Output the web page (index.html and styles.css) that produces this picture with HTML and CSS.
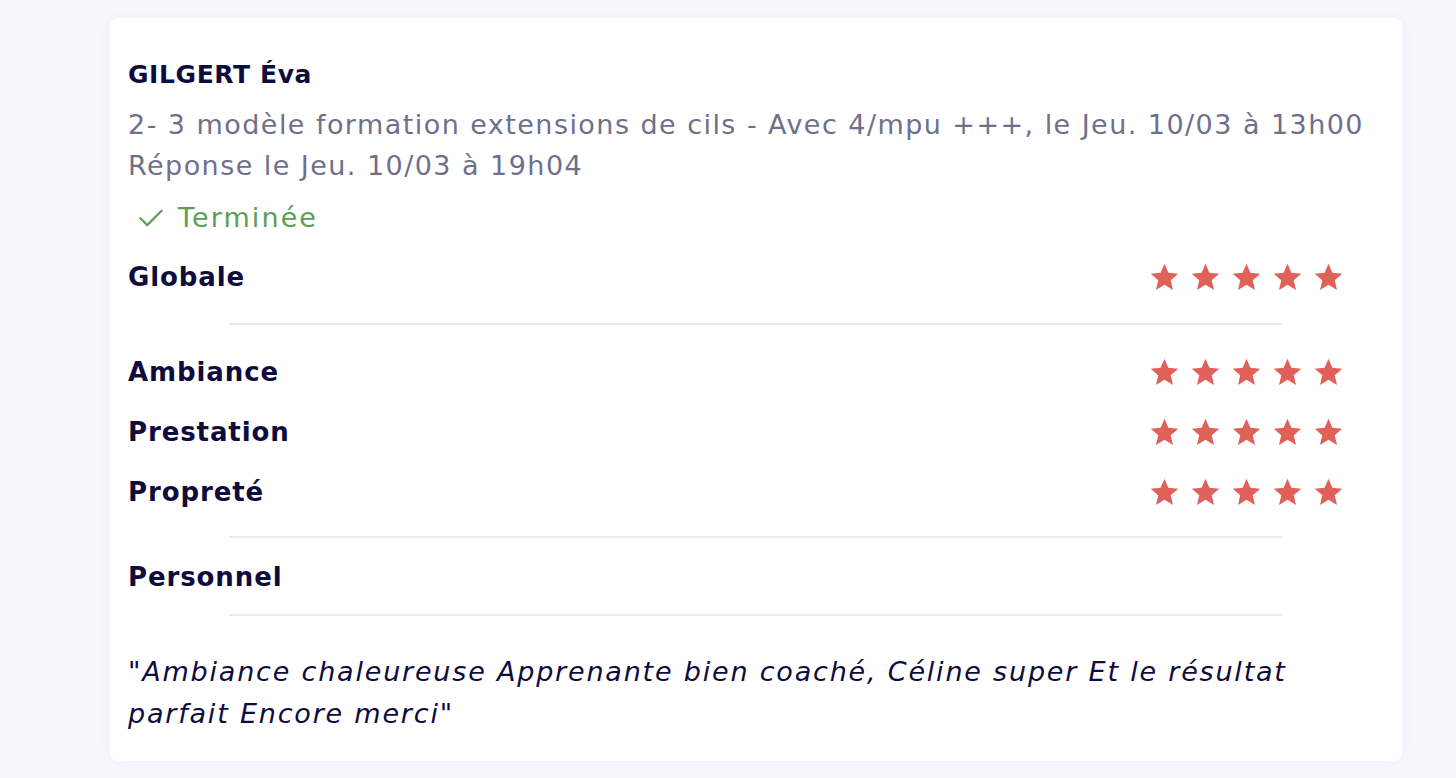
FILE: index.html
```html
<!DOCTYPE html>
<html lang="fr">
<head>
    <meta charset="UTF-8">
    <meta name="viewport" content="width=device-width, initial-scale=1.0">
    <title>Avis client</title>
    <link rel="stylesheet" href="styles.css">
</head>
<body>
    <div class="review-card">
        <h2 class="client-name">GILGERT Éva</h2>
        <p class="booking-info">2- 3 modèle formation extensions de cils - Avec 4/mpu +++, le Jeu. 10/03 à 13h00<br>Réponse le Jeu. 10/03 à 19h04</p>

        <div class="status">
            <svg class="status-icon" viewBox="0 0 24 24" width="30" height="30"><path d="M3.5 13l5.5 5.5L20.5 7" fill="none" stroke="currentColor" stroke-width="1.8" stroke-linecap="round" stroke-linejoin="round"/></svg>
            <span>Terminée</span>
        </div>

        <div class="rating-row rating-main">
            <span class="rating-label">Globale</span>
            <div class="stars">
                <svg viewBox="0 0 24 24"><path d="M12 17.27L18.18 21l-1.64-7.03L22 9.24l-7.19-.61L12 2 9.19 8.63 2 9.24l5.46 4.73L5.82 21z"/></svg>
                <svg viewBox="0 0 24 24"><path d="M12 17.27L18.18 21l-1.64-7.03L22 9.24l-7.19-.61L12 2 9.19 8.63 2 9.24l5.46 4.73L5.82 21z"/></svg>
                <svg viewBox="0 0 24 24"><path d="M12 17.27L18.18 21l-1.64-7.03L22 9.24l-7.19-.61L12 2 9.19 8.63 2 9.24l5.46 4.73L5.82 21z"/></svg>
                <svg viewBox="0 0 24 24"><path d="M12 17.27L18.18 21l-1.64-7.03L22 9.24l-7.19-.61L12 2 9.19 8.63 2 9.24l5.46 4.73L5.82 21z"/></svg>
                <svg viewBox="0 0 24 24"><path d="M12 17.27L18.18 21l-1.64-7.03L22 9.24l-7.19-.61L12 2 9.19 8.63 2 9.24l5.46 4.73L5.82 21z"/></svg>
            </div>
        </div>

        <hr class="divider divider-first">

        <div class="rating-row">
            <span class="rating-label">Ambiance</span>
            <div class="stars">
                <svg viewBox="0 0 24 24"><path d="M12 17.27L18.18 21l-1.64-7.03L22 9.24l-7.19-.61L12 2 9.19 8.63 2 9.24l5.46 4.73L5.82 21z"/></svg>
                <svg viewBox="0 0 24 24"><path d="M12 17.27L18.18 21l-1.64-7.03L22 9.24l-7.19-.61L12 2 9.19 8.63 2 9.24l5.46 4.73L5.82 21z"/></svg>
                <svg viewBox="0 0 24 24"><path d="M12 17.27L18.18 21l-1.64-7.03L22 9.24l-7.19-.61L12 2 9.19 8.63 2 9.24l5.46 4.73L5.82 21z"/></svg>
                <svg viewBox="0 0 24 24"><path d="M12 17.27L18.18 21l-1.64-7.03L22 9.24l-7.19-.61L12 2 9.19 8.63 2 9.24l5.46 4.73L5.82 21z"/></svg>
                <svg viewBox="0 0 24 24"><path d="M12 17.27L18.18 21l-1.64-7.03L22 9.24l-7.19-.61L12 2 9.19 8.63 2 9.24l5.46 4.73L5.82 21z"/></svg>
            </div>
        </div>
        <div class="rating-row">
            <span class="rating-label">Prestation</span>
            <div class="stars">
                <svg viewBox="0 0 24 24"><path d="M12 17.27L18.18 21l-1.64-7.03L22 9.24l-7.19-.61L12 2 9.19 8.63 2 9.24l5.46 4.73L5.82 21z"/></svg>
                <svg viewBox="0 0 24 24"><path d="M12 17.27L18.18 21l-1.64-7.03L22 9.24l-7.19-.61L12 2 9.19 8.63 2 9.24l5.46 4.73L5.82 21z"/></svg>
                <svg viewBox="0 0 24 24"><path d="M12 17.27L18.18 21l-1.64-7.03L22 9.24l-7.19-.61L12 2 9.19 8.63 2 9.24l5.46 4.73L5.82 21z"/></svg>
                <svg viewBox="0 0 24 24"><path d="M12 17.27L18.18 21l-1.64-7.03L22 9.24l-7.19-.61L12 2 9.19 8.63 2 9.24l5.46 4.73L5.82 21z"/></svg>
                <svg viewBox="0 0 24 24"><path d="M12 17.27L18.18 21l-1.64-7.03L22 9.24l-7.19-.61L12 2 9.19 8.63 2 9.24l5.46 4.73L5.82 21z"/></svg>
            </div>
        </div>
        <div class="rating-row">
            <span class="rating-label">Propreté</span>
            <div class="stars">
                <svg viewBox="0 0 24 24"><path d="M12 17.27L18.18 21l-1.64-7.03L22 9.24l-7.19-.61L12 2 9.19 8.63 2 9.24l5.46 4.73L5.82 21z"/></svg>
                <svg viewBox="0 0 24 24"><path d="M12 17.27L18.18 21l-1.64-7.03L22 9.24l-7.19-.61L12 2 9.19 8.63 2 9.24l5.46 4.73L5.82 21z"/></svg>
                <svg viewBox="0 0 24 24"><path d="M12 17.27L18.18 21l-1.64-7.03L22 9.24l-7.19-.61L12 2 9.19 8.63 2 9.24l5.46 4.73L5.82 21z"/></svg>
                <svg viewBox="0 0 24 24"><path d="M12 17.27L18.18 21l-1.64-7.03L22 9.24l-7.19-.61L12 2 9.19 8.63 2 9.24l5.46 4.73L5.82 21z"/></svg>
                <svg viewBox="0 0 24 24"><path d="M12 17.27L18.18 21l-1.64-7.03L22 9.24l-7.19-.61L12 2 9.19 8.63 2 9.24l5.46 4.73L5.82 21z"/></svg>
            </div>
        </div>

        <hr class="divider divider-second">

        <div class="rating-row rating-staff">
            <span class="rating-label">Personnel</span>
        </div>

        <hr class="divider divider-third">

        <p class="comment">"Ambiance chaleureuse Apprenante bien coaché, Céline super Et le résultat parfait Encore merci"</p>
    </div>
</body>
</html>
```

FILE: styles.css
```css
body {
    margin: 0;
    padding: 18px 0 17px 110px;
    background-color: #f7f7fc;
    font-family: 'DejaVu Sans', 'Open Sans', sans-serif;
    color: #0e0c3d;
}

.review-card {
    width: 1292px;
    box-sizing: border-box;
    padding: 41px 57px 26px 18px;
    background: #fff;
    border-radius: 8px;
    box-shadow: 0 0 16px rgba(40, 40, 120, 0.04);
}

.client-name {
    margin: 0;
    font-size: 25px;
    line-height: 32px;
    font-weight: 700;
    letter-spacing: 0.6px;
}

.booking-info {
    margin: 13px 0 0;
    font-size: 27px;
    line-height: 41px;
    color: #6f6f8c;
    letter-spacing: 1.45px;
    white-space: nowrap;
}

.status {
    display: flex;
    align-items: center;
    gap: 12px;
    margin-top: 13px;
    padding-left: 8px;
    height: 36px;
    color: #5a9f54;
    font-size: 27px;
    letter-spacing: 2.1px;
}

.status-icon {
    flex-shrink: 0;
}

.rating-row {
    display: flex;
    align-items: center;
    justify-content: space-between;
    height: 60px;
}

.rating-main {
    margin-top: 12px;
}

.rating-label {
    font-size: 26px;
    font-weight: 700;
    letter-spacing: 0.9px;
}

.stars {
    display: flex;
    gap: 8px;
}

.stars svg {
    width: 33px;
    height: 33px;
    fill: #e0605a;
}

.divider {
    height: 2px;
    border: none;
    background: #e9e8f4;
    margin: 0 63px 0 101px;
}

.divider-first {
    margin-top: 16px;
    margin-bottom: 17px;
}

.divider-second {
    margin-top: 14px;
    margin-bottom: 0;
}

.rating-staff {
    height: 40px;
    margin-top: 19px;
}

.divider-third {
    margin-top: 17px;
}

.comment {
    margin: 35px 0 0;
    font-size: 27px;
    line-height: 42px;
    font-style: italic;
    letter-spacing: 1.8px;
}
```
